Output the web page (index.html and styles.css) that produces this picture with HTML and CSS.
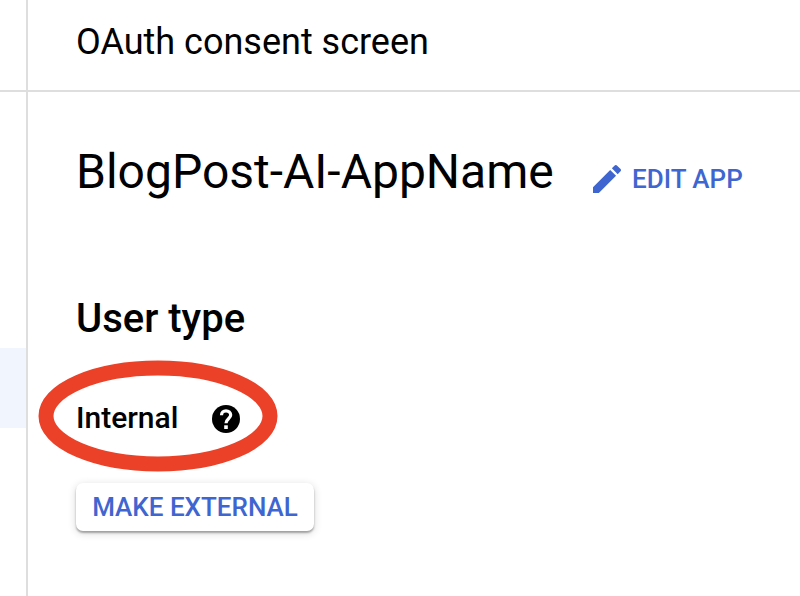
FILE: index.html
```html
<!DOCTYPE html>
<html lang="en">
<head>
<meta charset="utf-8">
<title>OAuth consent screen</title>
<link rel="stylesheet" href="styles.css">
</head>
<body>
<div class="shell">
  <aside class="sidebar"><div class="selected"></div></aside>
  <div class="page">
    <header class="topbar"><span class="page-title">OAuth consent screen</span></header>
    <main class="content">
      <div class="app-row">
        <h1>BlogPost-AI-AppName</h1>
        <a class="edit">
          <svg class="pencil" viewBox="3 3 18 18"><path d="M3 17.25V21h3.75L17.81 9.94l-3.75-3.75L3 17.25zM20.71 7.04c.39-.39.39-1.02 0-1.41l-2.34-2.34c-.39-.39-1.02-.39-1.41 0l-1.83 1.83 3.75 3.75 1.83-1.83z"/></svg>
          <span>EDIT APP</span>
        </a>
      </div>
      <h2>User type</h2>
      <div class="type-row">
        <span class="type">Internal</span>
        <svg class="help" viewBox="0 0 28 28"><circle cx="14" cy="14" r="14"/><path class="mark" d="M9.500 10.200C9.500 7.400 11.400 5.800 14 5.800s4.700 1.700 4.700 4.300c0 3.500-4.700 4-4.700 8.100"/><rect class="dot" x="12.200" y="20.300" width="3.600" height="3.700"/></svg>
        <svg class="ring" viewBox="0 0 242 114"><ellipse cx="121" cy="57" rx="112" ry="48"/></svg>
      </div>
      <button class="external">MAKE EXTERNAL</button>
    </main>
  </div>
</div>
</body>
</html>
```
FILE: styles.css
```css
* { box-sizing: border-box; }
body { margin: 0; background: #fff; color: #000; font-family: Roboto, sans-serif; }
.shell { display: flex; height: 596px; overflow: hidden; }
.sidebar { width: 28px; border-right: 2px solid #dedede; background: linear-gradient(#dedede, #dedede) 0 90px / 100% 2px no-repeat; padding-top: 348px; }
.selected { height: 80px; background: #f0f5fe; }
.page { flex: 1; }
.topbar { height: 92px; border-bottom: 2px solid #dedede; padding: 21px 0 0 48px; }
.page-title { display: block; font-size: 36px; line-height: 42px; white-space: nowrap; }
.content { padding: 50px 0 0 48px; }
.app-row { display: flex; height: 60px; }
h1 { margin: 0; width: 517px; font-size: 48px; font-weight: 400; line-height: 60px; white-space: nowrap; }
.edit { display: flex; align-items: center; height: 73px; color: #3f66d0; font-size: 26px; font-weight: 500; white-space: nowrap; }
.pencil { width: 28px; height: 28px; margin-right: 11px; fill: currentColor; }
h2 { margin: 93px 0 0; font-size: 40px; font-weight: 500; line-height: 48px; }
.type-row { position: relative; display: flex; align-items: center; margin-top: 57px; height: 38px; }
.type { width: 136px; font-size: 30px; font-weight: 500; line-height: 34px; margin-top: -2px; }
.help { width: 28px; height: 28px; }
.mark { fill: none; stroke: #fff; stroke-width: 3.2; }
.dot { fill: #fff; }
.ring { position: absolute; left: -39px; top: -41px; width: 242px; height: 114px; fill: none; stroke: #ea4128; stroke-width: 15; }
.external { display: block; margin: 45px 0 0; width: 238px; height: 48px; padding: 0; border: 0; border-radius: 7px; background: #fff; color: #3f66d0; font: 500 26px/48px Roboto, sans-serif; box-shadow: 0 2px 2px rgba(0,0,0,.3), 0 2px 8px rgba(0,0,0,.16); white-space: nowrap; }
```
